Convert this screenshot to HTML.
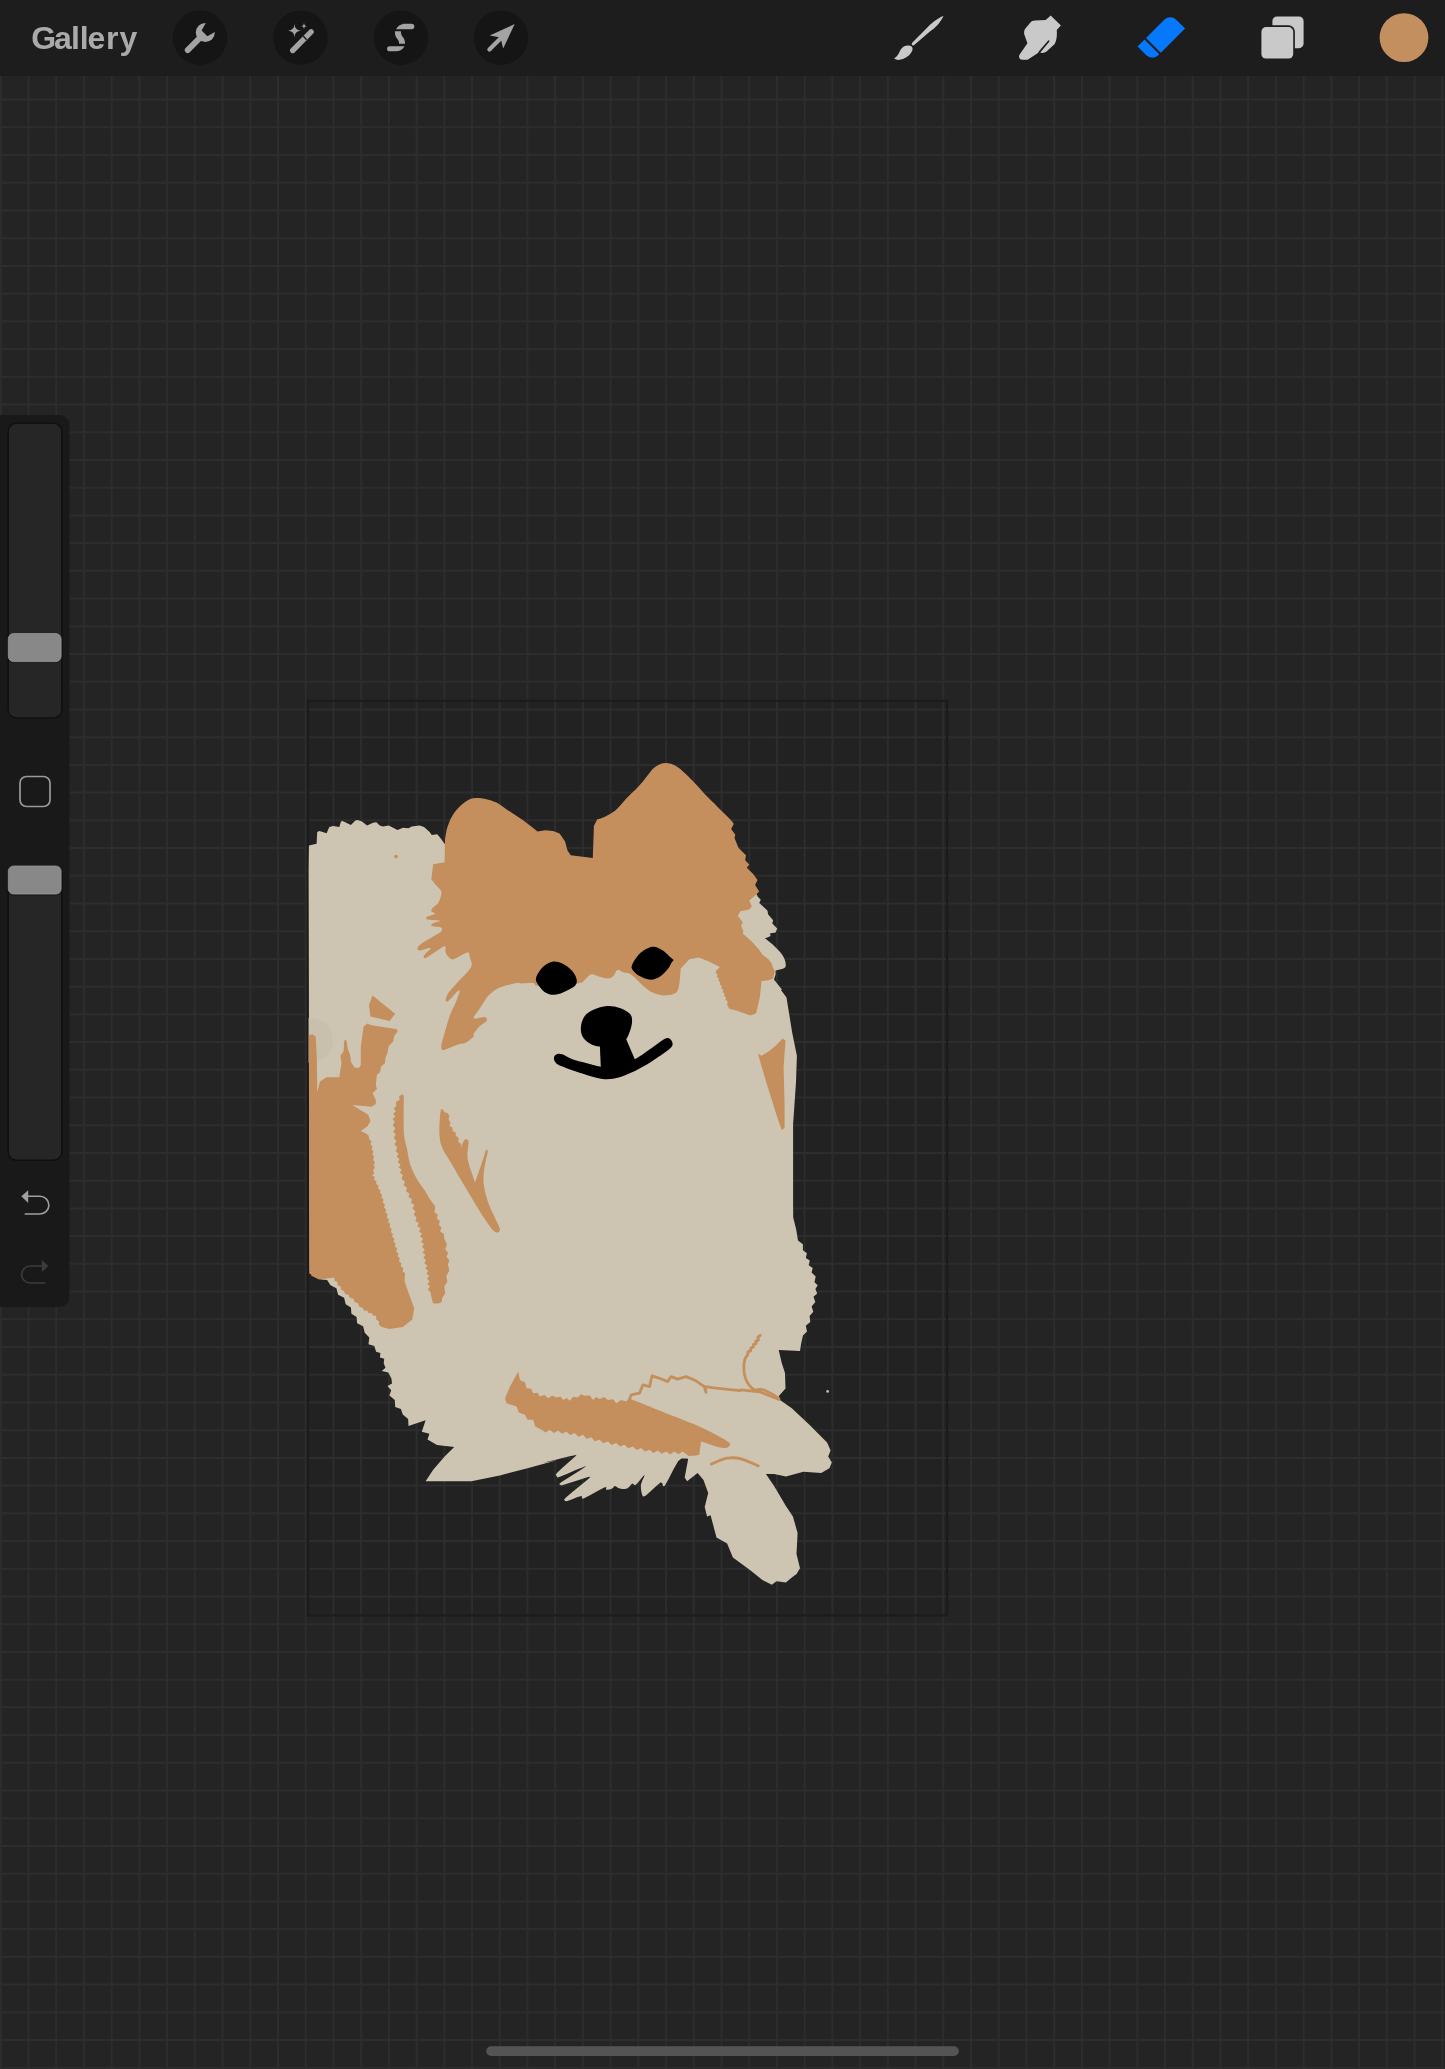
<!DOCTYPE html>
<html><head><meta charset="utf-8">
<style>
html,body{margin:0;padding:0;width:1445px;height:2069px;overflow:hidden;background:#242424;}
body{position:relative;font-family:"Liberation Sans",sans-serif;}
svg{position:absolute;left:0;top:0;display:block;}
</style></head><body>
<svg width="1445" height="2069" viewBox="0 0 1445 2069">
<rect x="307.9" y="700.8" width="639.2" height="914.7" fill="#222222"/>
<path d="M0.80 76V2069M28.52 76V2069M56.24 76V2069M83.96 76V2069M111.68 76V2069M139.40 76V2069M167.12 76V2069M194.84 76V2069M222.56 76V2069M250.28 76V2069M278.00 76V2069M305.72 76V2069M333.44 76V2069M361.16 76V2069M388.88 76V2069M416.60 76V2069M444.32 76V2069M472.04 76V2069M499.76 76V2069M527.48 76V2069M555.20 76V2069M582.92 76V2069M610.64 76V2069M638.36 76V2069M666.08 76V2069M693.80 76V2069M721.52 76V2069M749.24 76V2069M776.96 76V2069M804.68 76V2069M832.40 76V2069M860.12 76V2069M887.84 76V2069M915.56 76V2069M943.28 76V2069M971.00 76V2069M998.72 76V2069M1026.44 76V2069M1054.16 76V2069M1081.88 76V2069M1109.60 76V2069M1137.32 76V2069M1165.04 76V2069M1192.76 76V2069M1220.48 76V2069M1248.20 76V2069M1275.92 76V2069M1303.64 76V2069M1331.36 76V2069M1359.08 76V2069M1386.80 76V2069M1414.52 76V2069M1442.24 76V2069M0 99.60H1445M0 127.32H1445M0 155.04H1445M0 182.76H1445M0 210.48H1445M0 238.20H1445M0 265.92H1445M0 293.64H1445M0 321.36H1445M0 349.08H1445M0 376.80H1445M0 404.52H1445M0 432.24H1445M0 459.96H1445M0 487.68H1445M0 515.40H1445M0 543.12H1445M0 570.84H1445M0 598.56H1445M0 626.28H1445M0 654.00H1445M0 681.72H1445M0 709.44H1445M0 737.16H1445M0 764.88H1445M0 792.60H1445M0 820.32H1445M0 848.04H1445M0 875.76H1445M0 903.48H1445M0 931.20H1445M0 958.92H1445M0 986.64H1445M0 1014.36H1445M0 1042.08H1445M0 1069.80H1445M0 1097.52H1445M0 1125.24H1445M0 1152.96H1445M0 1180.68H1445M0 1208.40H1445M0 1236.12H1445M0 1263.84H1445M0 1291.56H1445M0 1319.28H1445M0 1347.00H1445M0 1374.72H1445M0 1402.44H1445M0 1430.16H1445M0 1457.88H1445M0 1485.60H1445M0 1513.32H1445M0 1541.04H1445M0 1568.76H1445M0 1596.48H1445M0 1624.20H1445M0 1651.92H1445M0 1679.64H1445M0 1707.36H1445M0 1735.08H1445M0 1762.80H1445M0 1790.52H1445M0 1818.24H1445M0 1845.96H1445M0 1873.68H1445M0 1901.40H1445M0 1929.12H1445M0 1956.84H1445M0 1984.56H1445M0 2012.28H1445M0 2040.00H1445M0 2067.72H1445" stroke="#2d2d2d" stroke-width="2" fill="none"/>
<rect x="307.9" y="700.8" width="639.2" height="914.7" fill="none" stroke="#1b1b1b" stroke-width="2"/>
<path d="M308.6 870.0 L308.9 845.4 L316.6 843.8 L317.2 832.1 L319.4 831.0 L326.6 833.2 L329.3 827.1 L333.2 826.0 L339.3 827.1 L341.0 821.6 L342.6 821.1 L350.9 824.9 L355.4 820.5 L357.6 820.0 L362.0 821.6 L367.0 825.5 L373.1 822.7 L376.4 822.2 L379.7 825.5 L383.1 826.6 L388.6 825.5 L394.1 828.3 L397.5 829.9 L403.0 827.7 L408.5 828.3 L411.8 826.6 L419.6 825.5 L424.0 827.1 L429.6 832.1 L431.8 834.9 L437.3 834.3 L440.6 838.2 L444.5 843.8 L452.3 849.0 L471.3 812.8 L490.3 810.9 L547.4 845.2 L567.6 871.8 L600.9 871.8 L609.5 829.9 L655.2 780.5 L693.2 797.6 L731.3 837.5 L750.3 883.2 L757.9 896.5 L755.9 894.8 L760.8 899.7 L759.2 903.0 L767.4 910.4 L768.2 914.5 L773.1 920.2 L772.3 923.5 L777.2 928.5 L775.6 932.6 L769.8 933.4 L770.7 935.9 L767.4 937.5 L764.9 938.3 L764.9 938.3 L766.6 939.6 L768.9 941.5 L771.5 943.6 L774.0 945.7 L776.2 947.9 L778.4 950.2 L780.5 952.6 L782.2 954.8 L783.4 956.8 L784.4 958.7 L785.0 960.5 L785.5 962.2 L785.7 963.8 L785.8 965.3 L785.5 966.7 L784.6 967.9 L782.7 968.8 L780.1 969.5 L777.4 970.0 L775.6 970.4 L775.6 974.5 L774.0 979.4 L782.2 990.0 L780.8 989.8 L786.5 997.4 L792.2 1032.8 L796.9 1055.7 L796.0 1082.3 L793.1 1124.2 L793.1 1200.3 L793.2 1217.4 L796.1 1229.0 L798.0 1240.6 L802.9 1244.2 L802.9 1250.3 L806.9 1253.2 L805.8 1258.0 L809.8 1260.6 L808.7 1265.3 L812.7 1267.9 L811.6 1272.5 L815.7 1276.6 L814.5 1282.2 L817.7 1285.2 L815.4 1289.0 L817.2 1293.5 L813.5 1296.7 L815.3 1302.1 L811.6 1306.4 L813.3 1311.8 L809.6 1316.1 L810.3 1321.9 L805.8 1325.7 L807.0 1331.4 L802.9 1335.4 L800.9 1345.1 L800.0 1350.9 L778.7 1349.9 L781.6 1362.5 L785.0 1373.1 L785.5 1388.6 L778.7 1396.3 L780.0 1400.0 L791.8 1408.2 L809.4 1424.7 L827.1 1442.4 L830.6 1450.6 L828.2 1456.5 L831.8 1462.4 L829.4 1468.2 L821.2 1472.9 L803.5 1471.8 L785.9 1476.5 L774.1 1474.1 L765.9 1474.1 L774.1 1485.9 L785.9 1505.9 L792.9 1516.5 L797.6 1532.9 L796.5 1554.1 L800.0 1568.2 L796.5 1574.1 L791.8 1577.6 L785.9 1582.4 L776.5 1581.2 L771.8 1584.7 L762.4 1580.0 L750.6 1570.6 L732.9 1557.6 L727.1 1543.5 L716.5 1537.6 L710.6 1515.3 L707.1 1516.5 L704.7 1507.1 L708.2 1492.9 L703.5 1480.0 L697.6 1472.9 L687.1 1481.2 L684.7 1477.6 L688.2 1458.8 L685.7 1458.6 L684.0 1458.5 L681.5 1458.6 L678.3 1461.1 L673.8 1468.8 L668.6 1479.0 L664.6 1486.1 L663.0 1486.3 L662.5 1483.4 L660.8 1482.3 L656.3 1485.9 L650.4 1491.4 L645.9 1495.4 L643.7 1496.5 L642.8 1496.2 L642.1 1494.8 L641.4 1492.1 L640.9 1488.5 L640.9 1484.8 L642.2 1480.7 L644.1 1476.7 L644.6 1474.8 L642.5 1477.1 L638.9 1481.6 L635.9 1484.8 L634.3 1485.0 L633.3 1483.9 L632.2 1483.6 L630.7 1484.9 L629.1 1487.0 L627.2 1488.5 L624.8 1489.0 L622.1 1488.9 L619.7 1488.5 L617.8 1487.7 L616.1 1486.6 L614.7 1486.1 L613.9 1486.6 L613.3 1487.6 L612.2 1488.5 L610.3 1489.2 L607.9 1489.7 L606.0 1489.8 L606.0 1488.7 L606.5 1487.3 L604.8 1487.3 L598.5 1490.5 L590.0 1495.3 L583.6 1498.5 L581.8 1498.4 L582.1 1496.8 L581.1 1496.0 L577.0 1497.3 L571.6 1499.5 L567.4 1501.0 L565.6 1501.3 L565.1 1501.0 L564.9 1500.4 L564.3 1500.1 L564.1 1499.5 L566.2 1497.3 L572.7 1491.8 L581.6 1484.6 L588.0 1479.2 L590.3 1477.0 L590.1 1476.7 L587.3 1477.3 L580.4 1479.4 L570.9 1482.5 L563.7 1484.8 L561.0 1485.5 L560.6 1485.3 L560.6 1484.8 L559.7 1484.6 L559.2 1484.1 L561.2 1482.3 L567.9 1477.9 L577.1 1472.2 L583.6 1468.0 L585.7 1466.4 L585.2 1466.3 L582.4 1467.4 L575.7 1470.1 L566.8 1474.0 L559.9 1476.7 L557.3 1477.4 L556.9 1476.9 L556.8 1476.1 L556.1 1475.5 L555.8 1474.6 L557.4 1472.4 L562.7 1467.5 L569.8 1461.3 L574.9 1456.8 L576.5 1455.1 L576.0 1455.0 L573.6 1455.5 L568.6 1456.6 L561.5 1458.3 L554.9 1459.9 L549.1 1461.3 L543.7 1462.7 L540.0 1463.6 L556.9 1460.3 L528.4 1467.9 L499.8 1475.5 L471.3 1481.2 L444.6 1481.2 L425.6 1481.2 L433.2 1469.8 L444.6 1456.5 L454.2 1447.0 L454.2 1447.0 L437.0 1445.1 L427.5 1439.4 L429.4 1433.7 L421.8 1431.8 L425.6 1420.3 L408.5 1426.1 L408.5 1426.1 L408.1 1419.1 L402.8 1414.6 L400.9 1408.9 L395.2 1407.0 L394.8 1400.1 L389.4 1395.6 L391.2 1390.3 L387.5 1386.1 L392.0 1383.5 L391.4 1378.5 L388.3 1372.5 L381.8 1370.9 L385.5 1367.7 L383.7 1363.3 L384.2 1358.8 L379.9 1357.5 L380.4 1353.1 L376.1 1351.8 L374.3 1346.0 L368.5 1344.2 L369.3 1337.6 L364.7 1332.8 L363.1 1326.3 L357.1 1323.3 L356.6 1317.1 L351.4 1313.8 L350.9 1307.6 L345.7 1304.3 L344.1 1297.7 L338.1 1294.7 L336.4 1288.2 L330.5 1285.2 L327.1 1280.0 L320.9 1279.5 L316.5 1274.2 L309.5 1273.8Z" fill="#cdc5b1"/>
<clipPath id="cc"><rect x="308.6" y="1000" width="60" height="90"/></clipPath><circle cx="310.4" cy="1040.3" r="22.5" fill="#c8c0ac" clip-path="url(#cc)"/>
<path d="M445.0 839.2 L445.4 836.8 L446.0 833.3 L446.7 829.5 L447.8 825.9 L449.1 822.5 L450.6 819.0 L452.4 815.7 L454.4 812.6 L456.7 809.7 L459.2 807.0 L461.9 804.6 L464.4 802.6 L466.6 801.0 L468.7 799.7 L470.9 798.8 L473.2 798.2 L475.8 797.9 L478.6 797.9 L481.4 798.3 L484.3 798.7 L487.3 799.4 L490.5 800.3 L493.6 801.4 L496.5 802.6 L499.4 804.2 L502.2 806.2 L504.7 808.0 L506.4 809.3 L523.1 820.3 L531.9 827.0 L537.5 831.4 L545.2 830.3 L553.0 830.9 L559.6 833.6 L565.1 841.4 L567.4 850.2 L570.7 855.2 L592.8 858.0 L593.9 825.9 L597.3 819.2 L600.0 818.7 L602.5 817.8 L603.7 817.2 L605.5 816.4 L607.6 815.2 L610.1 813.9 L612.9 812.3 L616.0 810.0 L619.1 806.8 L622.6 802.8 L626.3 798.6 L630.8 794.1 L635.6 789.4 L639.8 785.1 L643.1 781.3 L645.7 777.8 L648.1 774.7 L650.3 772.0 L652.2 769.5 L654.4 767.5 L657.0 765.7 L659.8 764.2 L662.7 763.3 L665.5 763.0 L668.3 763.2 L671.0 763.8 L673.5 764.7 L675.9 765.9 L678.2 767.5 L680.6 769.3 L683.0 771.4 L685.5 773.7 L688.1 776.2 L690.8 778.9 L693.8 782.0 L697.1 785.6 L700.7 789.6 L704.2 793.4 L707.7 796.9 L711.1 800.4 L714.6 803.8 L718.1 807.4 L721.7 810.9 L725.0 814.2 L727.9 817.1 L730.5 819.7 L732.2 821.4 L733.7 824.1 L731.2 829.0 L735.3 834.8 L734.5 838.1 L738.6 847.9 L746.0 855.3 L745.2 860.3 L749.3 864.4 L746.8 867.7 L753.4 874.2 L757.5 880.0 L755.1 884.9 L759.2 891.5 L755.9 894.8 L749.3 900.5 L751.8 906.3 L749.3 909.6 L740.3 911.2 L737.8 916.1 L742.7 921.9 L741.1 926.0 L743.5 930.9 L742.7 933.4 L751.8 941.6 L759.2 949.8 L762.4 954.8 L768.2 958.9 L771.5 963.0 L773.1 967.9 L774.8 971.2 L773.1 978.6 L768.2 980.2 L761.6 981.1 L759.8 997.4 L756.0 1013.6 L750.3 1015.5 L737.0 1010.7 L729.4 1008.8 L729.4 1008.8 L727.2 1005.3 L727.5 1001.2 L725.5 999.8 L726.0 997.4 L724.1 996.0 L724.6 993.6 L722.7 992.2 L723.2 989.8 L721.3 988.3 L721.8 986.0 L719.8 984.5 L720.3 982.2 L718.4 980.7 L718.9 978.4 L717.0 976.9 L717.5 974.6 L715.6 973.1 L716.1 970.8 L719.9 967.0 L708.4 961.2 L698.9 957.4 L689.4 959.3 L680.7 968.6 L680.3 973.9 L679.7 981.3 L678.8 987.3 L677.8 990.5 L676.5 992.2 L674.5 993.5 L671.2 994.7 L667.2 995.3 L663.2 995.4 L659.4 994.8 L655.6 993.7 L652.0 992.3 L648.9 990.5 L646.0 988.3 L643.3 986.1 L640.7 983.6 L638.2 980.9 L635.8 978.6 L633.7 976.6 L631.6 974.9 L629.6 973.6 L627.5 973.0 L625.5 972.7 L623.4 972.4 L621.2 971.3 L619.1 970.1 L617.2 969.9 L615.8 971.4 L614.8 974.0 L613.4 976.1 L611.7 977.4 L609.6 978.3 L607.2 978.6 L604.0 978.1 L600.4 977.1 L597.2 976.1 L594.9 975.1 L592.9 974.3 L591.0 974.2 L589.0 975.6 L586.9 977.8 L584.8 979.8 L583.5 981.3 L582.1 982.5 L577.3 983.6 L565.5 984.7 L550.2 985.7 L538.7 986.1 L534.9 985.3 L534.8 983.9 L533.7 982.9 L529.3 982.9 L523.9 983.3 L520.0 983.6 L519.7 982.7 L517.3 983.1 L513.9 983.6 L510.1 984.4 L505.8 985.6 L501.2 987.0 L497.0 988.8 L493.6 990.9 L490.7 993.4 L488.3 995.8 L486.6 997.8 L485.3 999.8 L484.0 1001.8 L482.6 1004.0 L481.2 1006.3 L479.6 1008.8 L477.1 1012.2 L474.3 1015.9 L473.5 1018.4 L476.4 1018.6 L481.1 1017.5 L484.8 1017.1 L486.5 1017.9 L487.0 1019.4 L486.6 1021.0 L484.9 1022.5 L482.2 1024.2 L479.6 1026.2 L477.3 1028.8 L475.1 1031.7 L473.5 1034.0 L473.4 1035.2 L473.9 1035.7 L473.5 1036.7 L471.5 1038.6 L468.6 1040.9 L465.7 1042.8 L463.3 1043.5 L460.9 1043.8 L457.9 1044.5 L453.5 1046.2 L448.6 1048.2 L444.8 1049.7 L443.1 1050.3 L442.6 1050.2 L442.2 1049.7 L441.6 1048.9 L441.2 1047.6 L441.3 1045.4 L442.1 1041.8 L443.4 1037.3 L444.8 1032.3 L446.4 1026.6 L448.2 1020.4 L450.0 1014.9 L451.8 1010.8 L453.6 1007.3 L455.3 1003.6 L457.4 998.2 L459.4 992.5 L459.6 989.7 L456.7 992.0 L452.0 997.2 L448.3 1001.0 L446.6 1001.8 L445.8 1001.3 L445.7 1000.1 L445.9 998.4 L446.7 996.1 L448.3 993.1 L451.3 989.3 L455.2 984.9 L458.7 981.0 L461.6 978.0 L464.3 975.6 L466.6 973.1 L468.8 970.5 L470.7 967.8 L471.8 965.3 L471.7 962.9 L470.9 960.6 L470.1 958.3 L469.6 955.9 L469.2 953.6 L468.3 952.2 L466.7 952.4 L464.6 953.5 L462.2 954.8 L459.3 956.4 L456.1 958.1 L453.5 959.2 L452.0 959.5 L451.1 959.1 L450.0 958.3 L448.5 957.0 L446.9 955.1 L445.7 953.1 L445.4 950.5 L445.6 947.6 L444.8 946.1 L442.6 946.9 L439.4 949.1 L436.1 951.4 L432.4 953.8 L428.6 956.3 L425.7 957.9 L424.1 958.0 L423.5 957.2 L423.9 955.7 L426.2 953.1 L429.5 949.9 L430.9 947.9 L428.4 948.1 L424.0 949.6 L420.4 950.5 L418.7 950.3 L417.7 949.7 L417.4 948.8 L417.6 947.7 L418.4 946.3 L420.4 944.4 L424.6 941.6 L429.9 938.4 L434.4 935.7 L437.1 934.2 L439.0 933.2 L440.5 932.2 L441.5 931.0 L442.1 929.8 L442.2 928.7 L441.8 928.0 L441.0 927.4 L439.6 927.0 L437.0 926.7 L433.9 926.5 L431.8 926.1 L431.1 925.4 L431.5 924.5 L432.6 923.5 L435.3 922.6 L438.8 921.6 L440.5 920.9 L438.9 920.5 L435.7 920.3 L432.6 920.0 L430.2 919.8 L428.0 919.6 L426.5 919.2 L426.1 918.4 L426.3 917.5 L427.4 916.6 L429.9 915.7 L433.2 914.8 L435.2 913.9 L434.6 913.1 L432.7 912.3 L431.3 911.3 L431.2 910.3 L431.7 909.1 L432.6 907.9 L434.2 906.5 L436.2 905.1 L437.9 903.5 L439.0 901.6 L439.8 899.5 L440.5 897.4 L441.1 895.4 L441.6 893.3 L441.3 891.3 L440.0 889.3 L438.0 887.2 L436.1 885.2 L434.4 883.2 L432.9 881.3 L431.8 880.0 L431.3 879.4 L433.2 864.2 L444.6 862.3Z" fill="#c48f5d"/>
<path d="M372.5 995.5 L395.2 1013.7 L389.7 1021.0 L370.4 1016.4 L369.0 1005.0Z" fill="#c48f5d"/>
<path d="M308.8 1035.4 L312.5 1034.3 L315.7 1036.5 L316.8 1057.9 L317.3 1092.3 L320.0 1081.5 L326.5 1077.2 L335.0 1077.2 L339.3 1077.2 L341.5 1063.3 L340.4 1055.8 L343.6 1051.5 L344.2 1040.8 L346.3 1039.7 L347.9 1049.3 L350.1 1054.7 L351.1 1062.2 L354.4 1067.6 L358.6 1068.1 L360.8 1065.4 L360.8 1047.2 L363.5 1026.8 L367.2 1023.6 L371.5 1025.2 L396.2 1028.9 L397.8 1031.1 L394.1 1036.5 L393.0 1041.8 L388.7 1046.1 L387.6 1052.6 L385.5 1057.9 L384.9 1063.3 L381.2 1066.5 L380.1 1071.9 L376.9 1075.1 L375.8 1084.7 L376.9 1089.0 L372.6 1093.3 L375.8 1099.8 L375.8 1104.1 L371.5 1106.7 L352.2 1105.1 L368.3 1114.8 L370.5 1121.2 L367.2 1126.6 L360.8 1130.9 L365.1 1133.0 L365.1 1133.0 L368.6 1135.4 L369.4 1139.5 L371.5 1141.5 L370.5 1144.3 L372.5 1146.4 L371.5 1149.1 L373.5 1151.6 L372.2 1154.4 L374.2 1156.8 L373.0 1159.7 L374.9 1162.1 L373.7 1165.0 L374.9 1167.8 L373.0 1170.3 L374.2 1173.1 L372.3 1175.6 L374.7 1177.1 L374.2 1179.9 L376.6 1181.3 L376.1 1184.1 L378.5 1185.6 L378.0 1188.4 L380.4 1189.9 L379.9 1192.7 L382.2 1194.7 L381.3 1197.6 L383.5 1199.6 L382.7 1202.5 L384.9 1204.5 L384.0 1207.4 L386.2 1209.4 L385.4 1212.3 L387.6 1214.3 L386.7 1217.2 L388.9 1219.2 L388.1 1222.1 L390.3 1224.1 L389.4 1227.0 L391.7 1229.0 L390.8 1231.9 L393.0 1233.9 L392.2 1236.7 L394.4 1238.8 L393.5 1241.6 L395.7 1243.7 L394.9 1246.5 L397.1 1248.6 L396.2 1251.4 L398.5 1253.4 L397.6 1256.3 L399.8 1258.3 L399.0 1261.2 L401.4 1263.2 L400.9 1266.3 L403.3 1268.3 L402.8 1271.4 L405.2 1273.3 L404.7 1276.4 L404.7 1281.4 L408.5 1292.8 L414.2 1308.1 L412.3 1319.5 L402.8 1327.1 L389.4 1329.0 L381.8 1327.1 L381.8 1327.1 L379.0 1325.0 L379.0 1321.4 L376.1 1319.2 L376.1 1315.7 L373.1 1315.8 L371.7 1313.1 L368.7 1313.3 L367.2 1310.6 L364.2 1310.7 L362.8 1308.1 L359.3 1306.8 L358.0 1303.3 L354.5 1302.1 L353.3 1298.5 L349.9 1297.9 L348.5 1294.7 L345.2 1294.1 L343.8 1290.9 L340.9 1289.6 L340.6 1286.5 L337.7 1285.2 L337.4 1282.1 L334.5 1280.8 L334.3 1277.6 L319.0 1279.5 L311.4 1275.7 L309.5 1270.0Z" fill="#c48f5d"/>
<path d="M402.8 1094.3 L403.8 1096.4 L403.8 1096.4 L403.7 1106.5 L403.6 1120.6 L403.8 1132.5 L404.6 1139.3 L405.8 1143.9 L407.0 1148.5 L407.9 1153.8 L408.8 1159.1 L410.2 1164.4 L412.4 1169.9 L415.0 1175.4 L417.6 1180.3 L420.2 1184.3 L422.7 1187.6 L425.1 1191.0 L427.5 1194.9 L429.8 1198.9 L431.5 1201.6 L431.5 1201.6 L435.2 1206.3 L434.6 1212.2 L437.8 1214.7 L436.8 1218.6 L439.9 1221.1 L438.9 1225.0 L441.6 1227.8 L440.0 1231.4 L444.0 1234.0 L444.2 1238.8 L446.9 1243.9 L445.3 1249.4 L448.1 1252.8 L446.6 1256.9 L449.4 1260.2 L447.9 1264.3 L449.3 1270.5 L446.3 1276.0 L447.4 1281.8 L444.2 1286.6 L445.3 1292.9 L442.1 1298.3 L442.1 1298.3 L442.0 1299.6 L441.8 1301.2 L441.0 1302.6 L439.1 1303.3 L436.7 1303.6 L434.6 1303.6 L433.6 1303.5 L433.1 1302.9 L432.5 1301.5 L431.7 1298.5 L430.9 1294.7 L430.4 1292.0 L430.4 1292.0 L427.8 1289.5 L430.0 1286.6 L427.5 1284.1 L429.7 1281.3 L427.1 1278.8 L429.3 1276.0 L426.4 1273.8 L428.3 1270.7 L425.4 1268.5 L427.2 1265.4 L424.3 1263.2 L426.1 1260.1 L423.4 1257.7 L425.4 1254.8 L422.7 1252.4 L424.7 1249.4 L422.0 1247.1 L424.0 1244.1 L421.1 1241.9 L423.0 1238.8 L420.1 1236.6 L421.9 1233.5 L419.0 1231.3 L420.8 1228.2 L417.5 1226.4 L418.7 1222.9 L415.4 1221.1 L416.6 1217.6 L413.7 1214.8 L415.5 1211.2 L412.6 1208.4 L414.4 1204.8 L411.0 1202.9 L412.0 1199.1 L408.5 1197.3 L409.5 1193.5 L406.0 1191.6 L407.0 1187.8 L403.7 1185.4 L404.9 1181.4 L401.5 1179.0 L402.8 1175.0 L399.9 1172.8 L401.7 1169.7 L398.8 1167.5 L400.6 1164.4 L397.7 1162.2 L399.6 1159.1 L396.7 1156.9 L398.5 1153.8 L395.6 1151.0 L397.4 1147.4 L394.5 1144.6 L396.4 1141.0 L393.7 1138.0 L395.8 1134.6 L393.2 1131.7 L395.3 1128.3 L392.7 1125.3 L394.8 1121.9 L392.7 1119.0 L395.3 1116.6 L393.2 1113.7 L395.8 1111.3 L393.7 1108.4 L396.4 1105.9 L395.9 1101.9 L399.6 1100.1 L399.1 1096.0 L402.8 1094.3Z" fill="#c48f5d"/>
<path d="M441.0 1109.1 L443.1 1109.7 L444.2 1112.3 L447.4 1112.9 L447.4 1112.9 L449.5 1115.9 L448.5 1119.5 L450.6 1122.6 L449.5 1126.1 L452.4 1127.6 L452.7 1130.9 L455.6 1132.4 L455.9 1135.7 L458.6 1138.0 L458.3 1141.6 L461.0 1143.9 L460.7 1147.4 L460.7 1147.4 L461.7 1145.2 L463.1 1142.2 L464.4 1140.0 L465.6 1139.3 L466.7 1139.4 L467.6 1140.0 L468.2 1140.3 L468.5 1141.0 L468.7 1143.1 L468.1 1147.2 L467.4 1152.8 L467.6 1159.1 L469.7 1167.2 L472.8 1176.1 L475.0 1182.5 L475.0 1182.5 L477.5 1175.5 L480.9 1165.8 L483.5 1158.0 L484.7 1154.0 L485.2 1151.8 L485.7 1150.6 L486.6 1149.8 L487.5 1150.0 L487.8 1151.6 L487.0 1155.5 L485.7 1161.0 L484.6 1166.5 L483.9 1171.6 L483.4 1176.9 L483.5 1182.5 L484.4 1188.6 L485.9 1195.1 L487.8 1201.6 L490.5 1208.4 L493.7 1215.1 L496.3 1220.7 L498.1 1224.6 L499.4 1227.2 L500.0 1229.2 L499.7 1230.9 L498.7 1232.0 L497.4 1232.4 L496.0 1232.4 L494.4 1231.6 L492.0 1229.2 L488.8 1225.0 L484.8 1219.1 L480.3 1212.2 L475.3 1204.0 L469.7 1194.6 L464.4 1185.7 L459.4 1177.3 L454.7 1169.3 L450.6 1162.3 L447.1 1156.6 L444.3 1151.9 L442.1 1147.4 L440.6 1143.2 L439.9 1139.2 L439.4 1134.6 L439.3 1128.6 L439.6 1122.0 L440.0 1116.6 L440.3 1113.0 L440.7 1110.7 L441.0 1109.1Z" fill="#c48f5d"/>
<path d="M757.9 1053.8 L761.7 1055.7 L769.3 1050.9 L775.1 1046.2 L782.7 1038.5 L785.5 1040.5 L783.6 1067.1 L784.6 1105.2 L784.6 1128.0 L781.7 1129.9 L777.0 1116.6 L767.4 1086.1Z" fill="#c48f5d"/>
<path d="M518.3 1371.6 L519.9 1379.9 L525.1 1382.6 L526.6 1388.2 L531.3 1388.8 L533.2 1393.2 L537.6 1392.7 L539.9 1396.5 L544.5 1395.0 L548.2 1398.2 L552.1 1395.4 L556.5 1397.4 L560.6 1396.4 L563.1 1399.9 L566.7 1397.9 L569.8 1400.7 L573.0 1396.8 L578.1 1397.4 L580.8 1394.2 L584.7 1395.7 L589.9 1395.6 L593.0 1399.9 L596.0 1397.1 L599.7 1399.0 L604.1 1397.1 L608.0 1399.9 L613.0 1399.3 L616.3 1403.2 L620.9 1400.0 L626.2 1401.5 L629.0 1398.4 L632.9 1399.9 L632.9 1399.9 L637.2 1401.6 L643.3 1404.1 L649.5 1406.5 L655.0 1408.7 L660.6 1410.9 L666.1 1413.2 L671.7 1415.4 L677.2 1417.6 L682.7 1419.8 L688.3 1422.0 L693.8 1424.1 L699.3 1426.4 L705.1 1429.2 L710.8 1432.0 L715.9 1434.8 L720.5 1437.2 L724.6 1439.5 L727.6 1441.4 L729.3 1442.7 L730.1 1443.7 L730.1 1444.7 L729.4 1446.0 L728.0 1447.3 L725.9 1448.0 L723.2 1448.0 L719.9 1447.4 L715.9 1446.4 L710.8 1444.8 L705.1 1442.8 L701.0 1441.4 L699.3 1454.7 L696.0 1455.5 L696.0 1455.5 L688.5 1456.1 L682.7 1451.4 L678.6 1454.2 L674.4 1451.4 L670.3 1454.2 L666.1 1451.4 L661.7 1453.7 L657.8 1450.5 L653.4 1452.9 L649.5 1449.7 L644.8 1451.6 L641.2 1448.0 L636.5 1450.0 L632.9 1446.4 L628.2 1448.3 L624.6 1444.7 L619.9 1446.6 L616.3 1443.1 L611.6 1445.0 L608.0 1441.4 L603.3 1443.3 L599.7 1439.7 L594.7 1441.2 L591.4 1437.2 L586.4 1438.7 L583.1 1434.8 L578.4 1436.7 L574.8 1433.1 L570.0 1435.0 L566.4 1431.4 L562.0 1433.8 L558.1 1430.6 L553.7 1433.0 L549.8 1429.8 L545.7 1432.6 L541.5 1429.8 L535.2 1426.6 L533.2 1419.8 L527.6 1419.7 L524.9 1414.8 L518.8 1412.6 L516.6 1406.5 L506.6 1403.2 L505.0 1398.2 L510.0 1386.6Z" fill="#c48f5d"/>
<circle cx="396.1" cy="856.6" r="1.8" fill="#c48f5d"/>
<g fill="none" stroke="#c48f5d" stroke-width="2.8" stroke-linecap="round" stroke-linejoin="round"><path d="M629.6 1399.0 L631.2 1394.9 L639.5 1393.2 L642.9 1384.9 L649.5 1386.6 L652.0 1375.8 L659.5 1378.3 L667.8 1381.6 L671.1 1376.6 L677.7 1379.1 L686.0 1376.6 L696.0 1380.8 L704.3 1386.6 L706.0 1392.4 L705.1 1386.6 L715.9 1388.2 L740.0 1390.7 L740.8 1389.9 L759.8 1391.8 L778.9 1399.4"/><path d="M760.3 1335.4 L757.9 1337.2 L758.4 1340.2 L755.9 1341.0 L756.0 1343.6 L753.4 1344.4 L753.5 1347.0 L750.8 1348.0 L750.6 1350.9 L747.9 1351.8 L747.7 1354.7 L747.7 1354.7 L747.2 1355.5 L746.3 1356.6 L745.5 1357.9 L744.8 1359.6 L744.4 1361.7 L744.0 1364.1 L743.9 1366.7 L743.9 1369.2 L744.1 1371.7 L744.5 1374.3 L745.1 1376.7 L745.8 1378.9 L746.6 1380.9 L747.6 1382.7 L748.6 1384.3 L749.7 1385.7 L750.7 1386.9 L751.8 1388.0 L753.1 1388.9 L754.5 1389.6 L756.3 1389.8 L758.3 1389.6 L760.3 1389.4 L762.2 1389.6 L763.9 1390.0 L765.5 1390.6 L767.1 1391.5 L769.0 1392.5 L771.5 1393.8 L774.3 1395.5 L776.9 1397.1 L778.7 1398.3"/><path d="M711.2 1464.1 C713.8 1463.1 722.1 1459.1 727.1 1458.2 C732.1 1457.4 736.0 1457.5 741.2 1458.8 C746.4 1460.1 755.4 1464.7 758.2 1465.9"/></g>
<g fill="#000000"><path d="M536.2 977.3 C537.0 974.6 539.7 970.0 542.4 967.4 C545.1 964.8 549.1 962.4 552.4 961.8 C555.7 961.1 559.0 962.1 562.4 963.6 C565.7 965.2 569.9 968.4 572.3 971.1 C574.7 973.8 576.3 977.3 576.7 979.8 C577.1 982.3 576.6 984.2 574.8 986.1 C573.0 987.9 569.4 989.6 566.1 991.0 C562.8 992.5 558.4 994.6 554.9 994.8 C551.3 995.0 547.8 994.2 544.9 992.3 C542.0 990.4 538.9 986.1 537.4 983.6 C536.0 981.1 535.4 980.0 536.2 977.3Z"/><path d="M632.1 964.9 C633.2 962.2 636.3 956.7 639.6 953.7 C642.9 950.7 648.3 947.4 652.0 946.8 C655.8 946.2 658.8 948.1 662.0 949.9 C665.2 951.8 669.4 956.3 671.3 958.0 C673.3 959.7 673.5 959.3 673.5 960.1 C673.5 961.0 672.2 961.6 671.3 963.0 C670.5 964.4 670.0 966.4 668.2 968.6 C666.5 970.8 663.7 974.2 660.8 976.1 C657.9 978.0 654.3 979.8 650.8 979.8 C647.3 979.8 642.6 977.7 639.6 976.1 C636.6 974.4 634.0 971.7 632.7 969.9 C631.5 968.0 631.0 967.6 632.1 964.9Z"/><path d="M581.0 1025.9 C581.5 1022.6 582.7 1018.6 584.8 1015.9 C586.8 1013.3 589.8 1011.4 593.5 1009.7 C597.2 1008.1 602.8 1006.3 607.2 1006.0 C611.6 1005.7 615.9 1006.6 619.7 1007.9 C623.4 1009.1 627.5 1011.3 629.6 1013.5 C631.7 1015.6 632.1 1017.8 632.1 1020.9 C632.1 1024.0 630.9 1028.8 629.6 1032.1 C628.4 1035.5 627.1 1038.8 624.6 1040.9 C622.1 1042.9 618.8 1043.7 614.7 1044.6 C610.5 1045.5 603.9 1046.7 599.7 1046.5 C595.6 1046.3 592.7 1045.1 589.8 1043.4 C586.8 1041.6 583.7 1038.8 582.3 1035.9 C580.8 1033.0 580.6 1029.2 581.0 1025.9Z"/><path d="M599.7 1042.1 L625.9 1038.4 L636.5 1063.3 L619.7 1073.2 L601.0 1072.0Z"/></g>
<path d="M557.4 1053.9 C558.8 1053.6 560.5 1053.7 563.0 1054.6 C565.5 1055.5 568.5 1057.9 572.3 1059.3 C576.2 1060.7 581.2 1061.8 586.0 1063.0 C590.8 1064.3 595.8 1066.1 601.0 1066.8 C606.2 1067.4 611.6 1068.2 617.2 1067.0 C622.8 1065.8 629.2 1062.5 634.6 1059.5 C640.0 1056.6 644.6 1053.0 649.5 1049.6 C654.5 1046.2 661.1 1040.8 664.5 1039.0 C667.9 1037.2 668.8 1038.2 670.1 1039.0 C671.4 1039.8 672.7 1042.3 672.6 1044.0 C672.5 1045.6 672.5 1046.4 669.5 1049.0 C666.5 1051.6 659.5 1056.3 654.5 1059.5 C649.5 1062.8 645.4 1065.6 639.6 1068.5 C633.8 1071.5 625.9 1075.5 619.7 1077.2 C613.4 1079.0 608.4 1079.5 602.2 1078.9 C596.0 1078.2 589.1 1075.6 582.3 1073.5 C575.4 1071.4 565.7 1068.0 561.1 1066.0 C556.5 1064.0 556.0 1063.0 554.9 1061.4 C553.7 1059.8 553.8 1057.7 554.3 1056.4 C554.7 1055.2 555.9 1054.3 557.4 1053.9Z" fill="#000000"/>
<circle cx="827.6" cy="1391.4" r="1.3" fill="#cdc5b1"/>
<rect x="0" y="0" width="1445" height="76" fill="#1d1d1d"/>
<text x="31.2 54.0 71.1 79.7 87.6 106.0 119.6" y="49.2" font-family="Liberation Sans" font-weight="bold" font-size="32" fill="#ababab" opacity="0.999" style="will-change:transform">Gallery</text>

<circle cx="200" cy="37.7" r="27.2" fill="#151515"/>
<circle cx="300.5" cy="37.7" r="27.2" fill="#151515"/>
<circle cx="401" cy="37.7" r="27.2" fill="#151515"/>
<circle cx="501" cy="37.7" r="27.2" fill="#151515"/>
<!-- wrench -->
<mask id="wm" maskUnits="userSpaceOnUse" x="170" y="5" width="60" height="60">
  <rect x="170" y="5" width="60" height="60" fill="#fff"/>
  <g transform="translate(205.3 32.5) rotate(45)"><path d="M-4.2 0.6 Q-4.2 1.2 -3.4 1.2 L3.4 1.2 Q4.2 1.2 4.2 0.6 L7.8 -12 L-7.8 -12 Z" fill="#000"/></g>
</mask>
<g fill="#a3a3a3" mask="url(#wm)">
  <circle cx="205.3" cy="32.5" r="9.5"/>
  <g transform="translate(205.3 32.5) rotate(45)"><rect x="-2.9" y="4" width="5.8" height="23.8" rx="2.9"/></g>
</g>
<!-- wand -->
<line x1="292.7" y1="50.5" x2="311.1" y2="31.9" stroke="#a3a3a3" stroke-width="5.4" stroke-linecap="round"/>
<line x1="303.2" y1="36.0" x2="306.6" y2="39.7" stroke="#151515" stroke-width="1.3"/>
<path d="M294.50 23.10 C294.50 28.40 296.80 30.70 302.10 30.70 C296.80 30.70 294.50 33.00 294.50 38.30 C294.50 33.00 292.20 30.70 286.90 30.70 C292.20 30.70 294.50 28.40 294.50 23.10Z" fill="#a3a3a3"/>
<path d="M304.00 22.50 C304.00 25.00 305.10 26.10 307.60 26.10 C305.10 26.10 304.00 27.20 304.00 29.70 C304.00 27.20 302.90 26.10 300.40 26.10 C302.90 26.10 304.00 25.00 304.00 22.50Z" fill="#a3a3a3"/>
<!-- selection S -->
<g fill="#a3a3a3">
<path d="M396.1 29.2 C397.8 26.2 401 23.8 405 23.8 L411.6 23.8 A2.7 2.7 0 0 1 411.6 29.2 Z"/>
<path d="M394.9 31.3 L400.9 31.3 C400.9 34.5 401.6 35.6 403 37.3 C404.4 39 405 40.5 405 43.7 L399.1 43.7 C399.1 41.5 398.6 40.6 397.2 38.8 C395.6 36.8 394.9 35 394.9 31.3 Z"/>
<path d="M404.6 46.2 C402.9 49.3 399.9 51.3 395.9 51.3 L389.6 51.3 A2.55 2.55 0 0 1 389.6 46.2 Z"/>
</g>
<!-- arrow -->
<path d="M514.7 24.1 L489.7 35.6 L500.4 37.6 L503.2 48.6 Z" fill="#a3a3a3"/>
<line x1="489.4" y1="49.6" x2="501.5" y2="37.6" stroke="#a3a3a3" stroke-width="4.2" stroke-linecap="round"/>
<!-- brush -->
<path d="M894.2 58.2 C897 57 898.6 54 900.2 50.6 C902.2 46.6 906 45.4 909 45.6 C912 45.9 913.2 48 912.3 50.6 C911.2 53.6 908 57.2 903 59.1 C899 60.4 896 60.2 894.2 58.2 Z" fill="#c9c9c9"/>
<path d="M912.2 42.8 L926.6 28.2 C931 23.8 936 19.2 943.6 15.8 C940 23.6 934.4 28.6 929.9 31.6 L914.2 45 A1.4 1.4 0 0 1 912.2 42.8 Z" fill="#c9c9c9"/>
<!-- smudge -->
<path d="M1050.7 15.4 L1060.9 25.4 L1056.7 30 C1057.1 33 1057.1 40 1054.5 44.2 L1046.2 51.8 C1044.2 53.3 1041.2 53.3 1039.5 51.9 L1027.6 59.8 L1022 59.8 C1019.5 59.5 1018.4 57 1019.5 54.8 L1027.4 43.2 L1024.3 34.5 C1023.8 32 1024.2 30 1025.6 28.3 L1030 23 C1031.5 21.2 1033 20.6 1035 20.5 L1045.7 20 Z" fill="#c9c9c9"/>
<line x1="1039.2" y1="52.4" x2="1048.6" y2="41.2" stroke="#1d1d1d" stroke-width="1.7" stroke-linecap="round"/>
<!-- eraser -->
<g transform="translate(1161.3 37.5) rotate(-45)">
  <path d="M-23.15 -10.45 L14.65 -10.45 A8.5 8.5 0 0 1 23.15 -1.95 L23.15 10.45 L-14.65 10.45 A8.5 8.5 0 0 1 -23.15 1.95 Z" fill="#0679fb"/>
  <rect x="-13.3" y="-11.5" width="2.1" height="23" fill="#1d1d1d"/>
</g>
<!-- layers -->
<rect x="1272.4" y="16.4" width="31.2" height="31.8" rx="4.6" fill="#c9c9c9"/>
<rect x="1259.7" y="25.35" width="35.2" height="34.95" rx="6.3" fill="#1d1d1d"/>
<rect x="1261.4" y="27.05" width="31.8" height="31.55" rx="4.6" fill="#c9c9c9"/>
<!-- color -->
<circle cx="1404" cy="37.6" r="24.4" fill="#c48f5e"/>


<path d="M0 415H59A10.5 10.5 0 0 1 69.5 425.5V1296.5A10.5 10.5 0 0 1 59 1307H0Z" fill="#191919"/>
<rect x="8.2" y="423.3" width="53.6" height="294.6" rx="8" fill="#262626" stroke="#0f0f0f" stroke-width="1.4"/>
<rect x="8" y="634" width="53.3" height="29" rx="5.5" fill="#121212" opacity="0.6"/>
<rect x="8.3" y="633.6" width="52.8" height="28" rx="5.3" fill="#888888" stroke="#999999" stroke-width="0.8"/>
<rect x="20" y="776.5" width="30" height="30" rx="6.5" fill="none" stroke="#9a9a9a" stroke-width="1.7"/>
<rect x="8.2" y="865.6" width="53.6" height="294.6" rx="8" fill="#262626" stroke="#0f0f0f" stroke-width="1.4"/>
<rect x="8" y="866.5" width="53.3" height="29" rx="5.5" fill="#121212" opacity="0.6"/>
<rect x="8.3" y="866" width="52.8" height="28" rx="5.3" fill="#888888" stroke="#999999" stroke-width="0.8"/>
<!-- undo -->
<path d="M21.3 1196.3 L28.2 1190.2 L28.2 1203 Z" fill="#a0a0a0"/>
<path d="M27.5 1196.3 H39.9 A9 8.85 0 0 1 39.9 1214 H24.7" fill="none" stroke="#a0a0a0" stroke-width="1.6"/>
<!-- redo -->
<path d="M48.4 1266 L41.9 1259.9 L41.9 1271.9 Z" fill="#3c3c3c"/>
<path d="M42.5 1266 H30.8 A9.3 8.5 0 0 0 30.8 1283 H45.5" fill="none" stroke="#3c3c3c" stroke-width="1.6"/>

<rect x="486.2" y="2046.3" width="472.7" height="9.7" rx="4.85" fill="#545454"/>
</svg>
</body></html>
